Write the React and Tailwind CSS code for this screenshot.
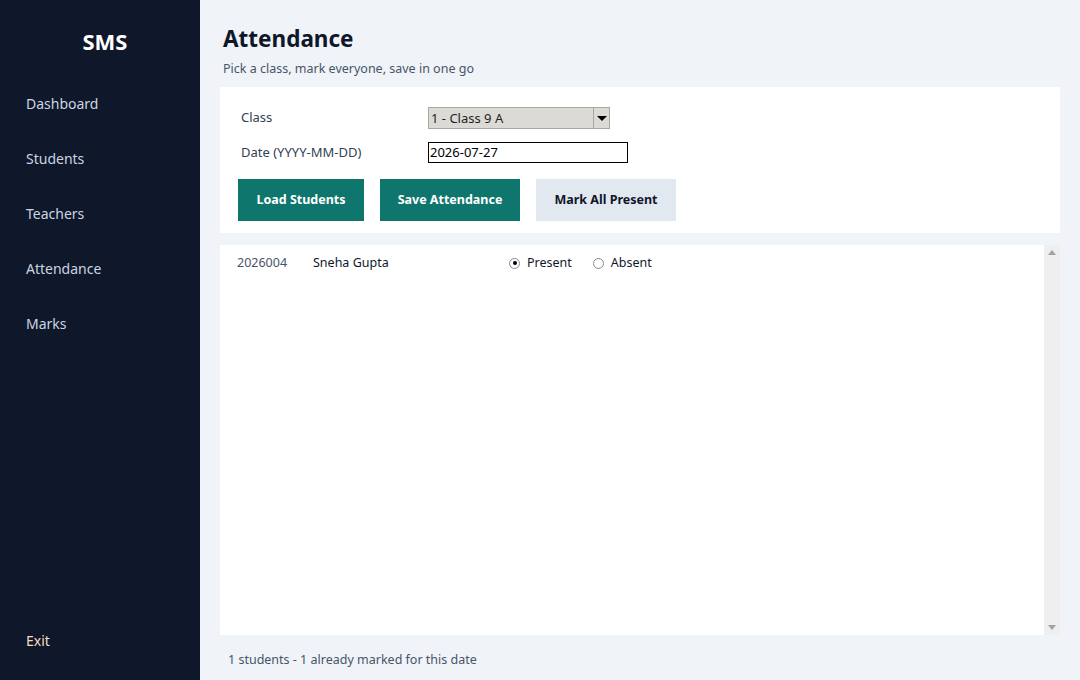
import React, { useState } from "react";

const navItems = ["Dashboard", "Students", "Teachers", "Attendance", "Marks"];

const Radio = ({ checked, label, onClick }) => (
  <label className="flex items-center gap-[7px] cursor-pointer" onClick={onClick}>
    <span className="w-[11px] h-[11px] rounded-full border border-[#8a8a8a] bg-white flex items-center justify-center">
      {checked && <span className="w-[4px] h-[4px] rounded-full bg-black" />}
    </span>
    <span className="text-[12.5px] text-[#0f172a]">{label}</span>
  </label>
);

const App = () => {
  const [status, setStatus] = useState("present");

  return (
    <div
      className="flex w-[1080px] h-[680px] bg-[#f0f3f8] overflow-hidden"
      style={{ fontFamily: '"Noto Sans", "Open Sans", sans-serif' }}
    >
      {/* Sidebar */}
      <aside className="w-[200px] shrink-0 bg-[#0f172a] flex flex-col">
        <div className="h-[84px] pt-[27px] pl-[10px] text-center text-[22px] font-bold text-white leading-[28px]">
          SMS
        </div>
        <nav className="flex flex-col">
          {navItems.map((item) => (
            <div key={item} className="h-[55px] pl-[26px] text-[14px] leading-[20px] text-[#cbd5e1] pt-[10px] cursor-pointer">
              {item}
            </div>
          ))}
        </nav>
        <div className="mt-auto pl-[26px] pb-[29px] text-[14px] leading-[20px] text-[#f5dcc0]">Exit</div>
      </aside>

      {/* Main */}
      <main className="flex-1 flex flex-col pl-[20px] pr-[20px]">
        <div className="pl-[3px] pt-[23px] h-[87px]">
          <h1 className="text-[22.5px] font-bold leading-[32px] text-[#0f172a]">Attendance</h1>
          <p className="text-[12.5px] leading-[18px] mt-[5px] text-[#475569]">Pick a class, mark everyone, save in one go</p>
        </div>

        <section className="bg-white h-[146px] pt-[20px] px-[18px]">
          <div className="grid grid-cols-[187px_1fr] items-center gap-y-[13px] pl-[3px]">
            <span className="text-[13px] text-[#334155]">Class</span>
            <div className="flex w-[182px] h-[22px] border border-[#a8a8a0] bg-[#dcdad5]">
              <span className="flex-1 text-[13px] leading-[20px] pl-[2px] text-[#1f1f1f]">1 - Class 9 A</span>
              <span className="w-[16px] border-l border-[#a8a8a0] flex items-center justify-center">
                <span className="w-0 h-0 border-l-[5px] border-r-[5px] border-t-[5px] border-l-transparent border-r-transparent border-t-black" />
              </span>
            </div>
            <span className="text-[13px] text-[#334155]">Date (YYYY-MM-DD)</span>
            <div className="w-[200px] h-[21px] border border-black text-[13px] leading-[19px] pl-[1px] text-black">2026-07-27</div>
          </div>
          <div className="flex gap-[16px] mt-[16px]">
            <button className="w-[126px] h-[42px] bg-[#0f766e] text-white text-[12.5px] font-bold">Load Students</button>
            <button className="w-[140px] h-[42px] bg-[#0f766e] text-white text-[12.5px] font-bold">Save Attendance</button>
            <button className="w-[140px] h-[42px] bg-[#e2e8f0] text-[#0f172a] text-[12.5px] font-bold">Mark All Present</button>
          </div>
        </section>

        <section className="mt-[12px] h-[390px] flex bg-white">
          <div className="flex-1">
            <div className="flex items-center h-[36px] pl-[17px]">
              <span className="w-[76px] text-[12.5px] text-[#475569]">2026004</span>
              <span className="w-[196px] text-[12.5px] text-[#0f172a]">Sneha Gupta</span>
              <div className="flex gap-[21px]">
                <Radio checked={status === "present"} label="Present" onClick={() => setStatus("present")} />
                <Radio checked={status === "absent"} label="Absent" onClick={() => setStatus("absent")} />
              </div>
            </div>
          </div>
          <div className="w-[16px] bg-[#efefef] flex flex-col items-center justify-between py-[5px]">
            <span className="w-0 h-0 border-l-[4px] border-r-[4px] border-b-[5px] border-l-transparent border-r-transparent border-b-[#a3a3a3]" />
            <span className="w-0 h-0 border-l-[4px] border-r-[4px] border-t-[5px] border-l-transparent border-r-transparent border-t-[#a3a3a3]" />
          </div>
        </section>

        <p className="pl-[8px] pt-[16px] text-[12.5px] leading-[18px] text-[#475569]">
          1 students - 1 already marked for this date
        </p>
      </main>
    </div>
  );
};

export default App;
